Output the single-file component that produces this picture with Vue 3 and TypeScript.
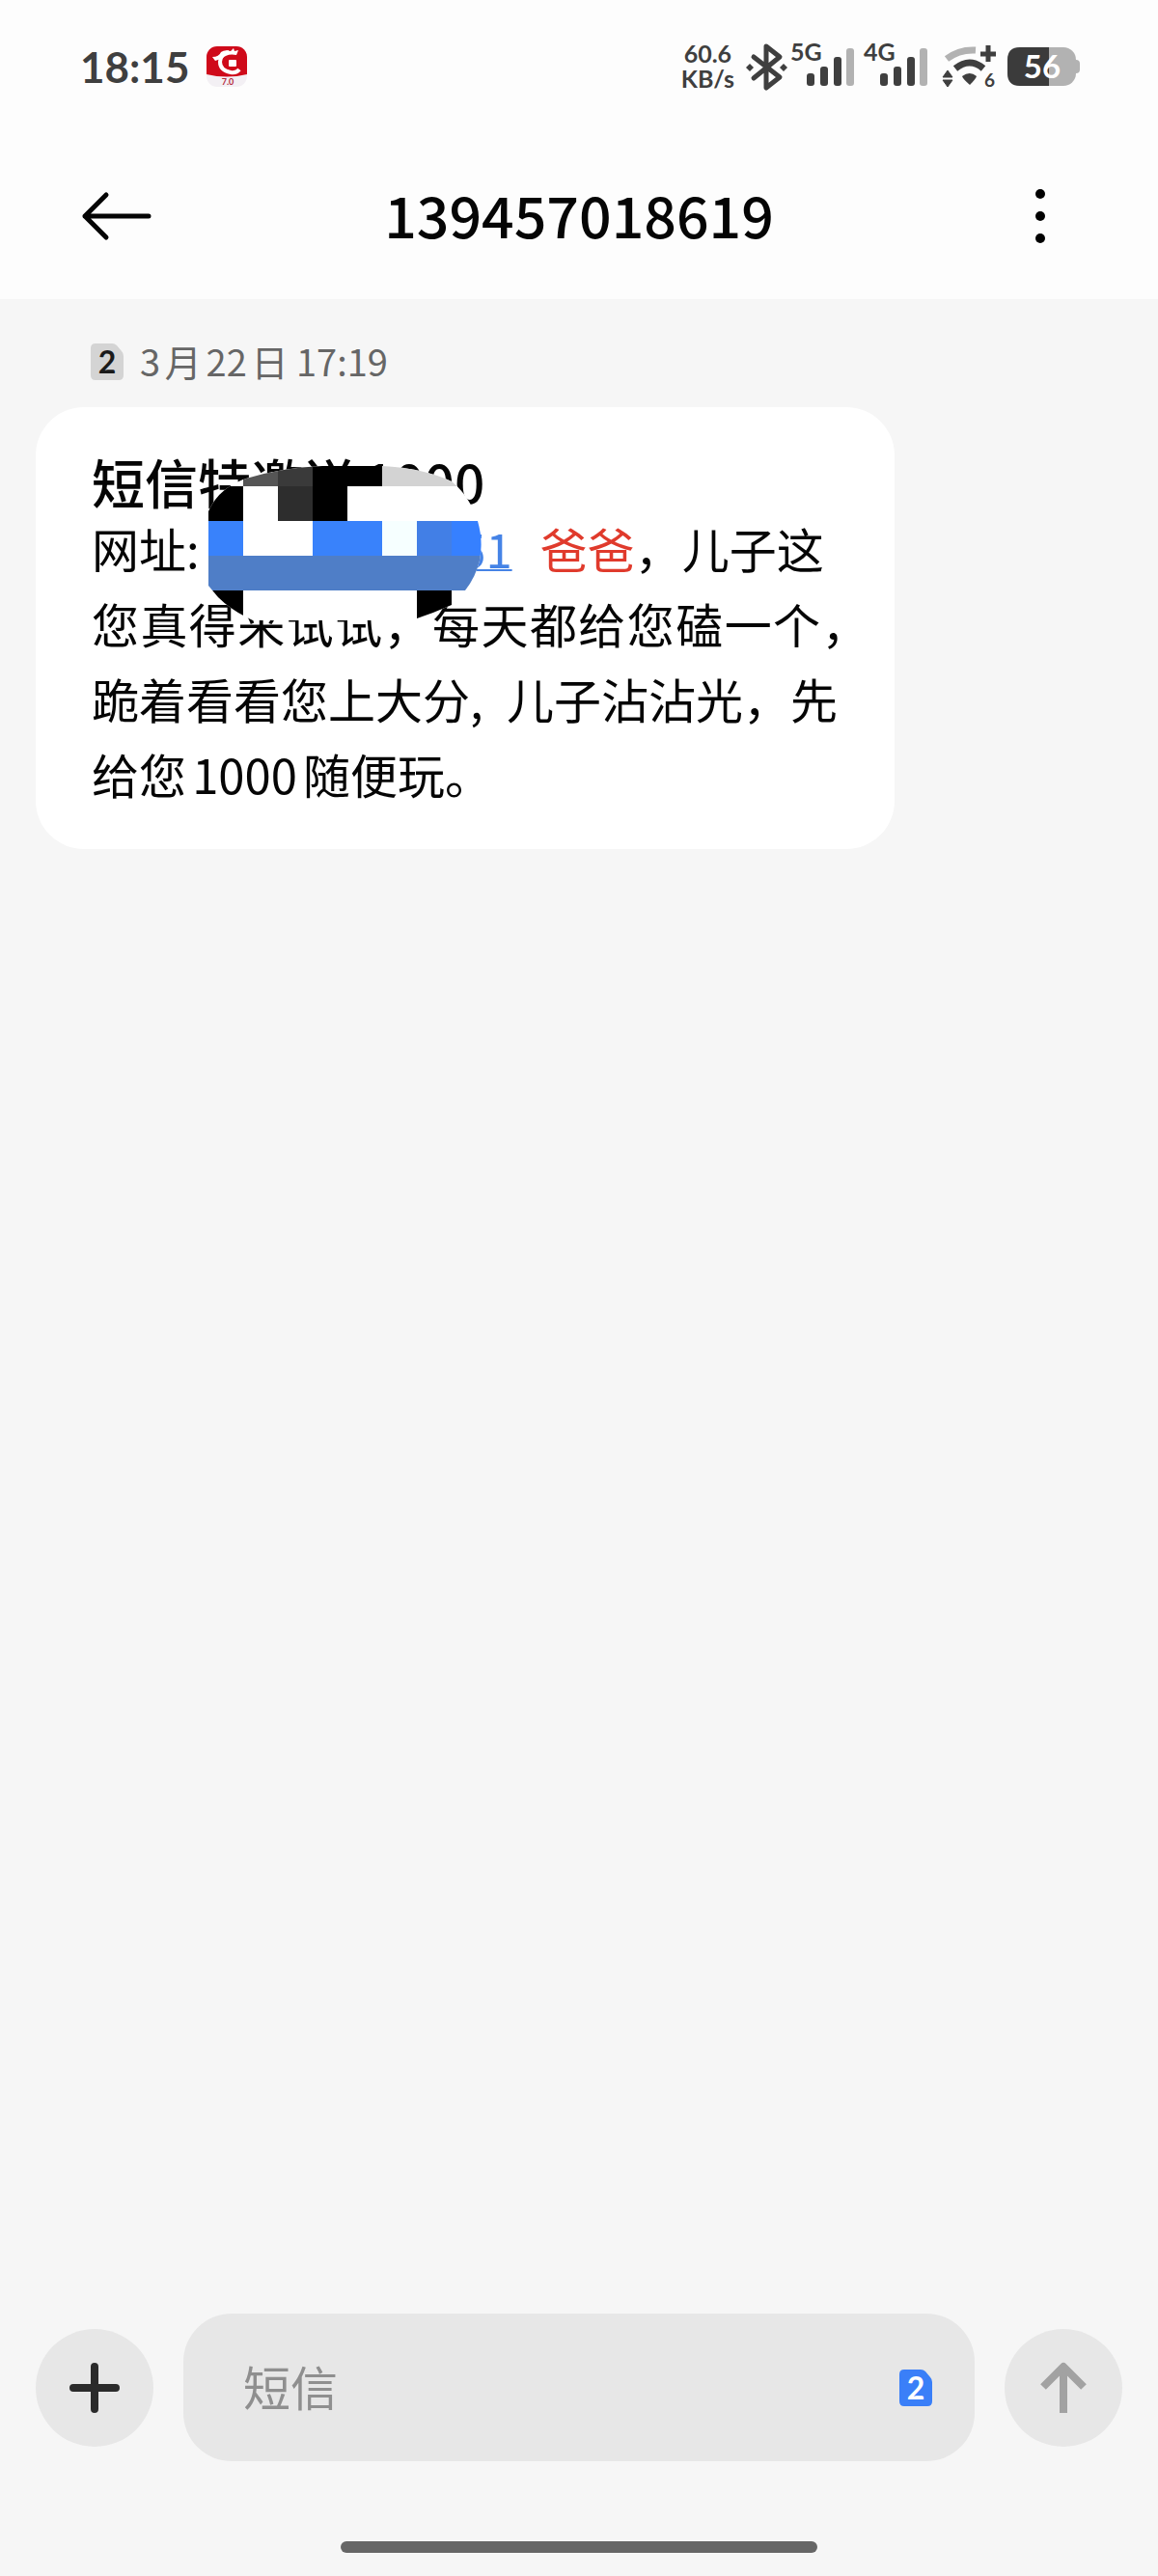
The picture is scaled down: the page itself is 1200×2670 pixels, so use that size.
<script setup lang="ts">
import { ref } from 'vue'

interface Block {
  x: number
  y: number
  w: number
  h: number
  fill: string
}

const draft = ref('')
const sender = '139457018619'

const blocks: Block[] = [
  { x: 36, y: 0, w: 36, h: 21, fill: '#555555' },
  { x: 72, y: 0, w: 36, h: 21, fill: '#3a3a3a' },
  { x: 108, y: 0, w: 72, h: 21, fill: '#000000' },
  { x: 180, y: 0, w: 104, h: 21, fill: '#d3d3d3' },
  { x: 0, y: 21, w: 36, h: 36, fill: '#000000' },
  { x: 72, y: 21, w: 36, h: 36, fill: '#2d2d2d' },
  { x: 108, y: 21, w: 36, h: 36, fill: '#000000' },
  { x: 0, y: 57, w: 36, h: 36, fill: '#3982fb' },
  { x: 108, y: 57, w: 72, h: 36, fill: '#3982fb' },
  { x: 180, y: 57, w: 36, h: 36, fill: '#f6ffff' },
  { x: 216, y: 57, w: 36, h: 36, fill: '#427fe6' },
  { x: 252, y: 57, w: 32, h: 36, fill: '#3680ff' },
  { x: 0, y: 93, w: 284, h: 36, fill: '#4f7ec7' },
  { x: 0, y: 129, w: 36, h: 32, fill: '#000000' },
  { x: 216, y: 129, w: 36, h: 32, fill: '#000000' },
]

const signals = ['5G', '4G']
</script>

<template>
  <div class="phone">
    <header class="top">
      <div class="status">
        <div class="status-left">
          <time class="clock">18:15</time>
          <svg class="app-icon" viewBox="0 0 42 42" width="42" height="42" aria-hidden="true">
            <defs>
              <clipPath id="appShape"><rect width="42" height="42" rx="11" /></clipPath>
            </defs>
            <g clip-path="url(#appShape)">
              <rect width="42" height="42" fill="#f3f0f4" />
              <path d="M0 0H42V29Q21 34 0 29Z" fill="#cf0a1a" />
            </g>
            <path d="M34 24Q31 28 25 27Q14 25 14 16Q15 7 23 6" fill="none" stroke="#fff" stroke-width="4" />
            <path d="M6 11Q13 11 15 6Q19 3 25 5L28 2L29 5L33 4L31 9Q21 7 16 13L12 14L9 15Z" fill="#fff" />
            <rect x="23" y="14" width="8" height="7" rx="1" fill="#fff" />
            <text x="22" y="40" text-anchor="middle" font-size="9" font-weight="700" fill="#b3283a">7.0</text>
          </svg>
        </div>
        <div class="status-right">
          <div class="speed"><span>60.6</span><span>KB/s</span></div>
          <svg class="bluetooth" viewBox="0 0 46 48" width="46" height="48" aria-hidden="true">
            <path d="M10 14L37 35L23 46V3L37 14L10 36" fill="none" stroke="#3f3f3f" stroke-width="5" stroke-linejoin="round" stroke-linecap="round" />
            <path d="M6 21L10 25L6 29L2 25ZM41 21L45 25L41 29L37 25Z" fill="#3f3f3f" />
          </svg>
          <svg v-for="name in signals" :key="name" class="signal" viewBox="0 0 68 56" width="68" height="56" aria-hidden="true">
            <text x="0" y="22" font-size="25" font-weight="700" fill="#3f3f3f">{{ name }}</text>
            <rect x="17" y="35" width="8" height="13" rx="3" fill="#3f3f3f" />
            <rect x="31" y="28" width="8" height="20" rx="3" fill="#3f3f3f" />
            <rect x="45" y="18" width="8" height="30" rx="3" fill="#3f3f3f" />
            <rect x="58" y="9" width="8" height="39" rx="3" fill="#b2b2b2" />
          </svg>
          <svg class="wifi" viewBox="0 0 58 52" width="58" height="52" aria-hidden="true">
            <path d="M4 18Q17 8 34 9" fill="none" stroke="#b2b2b2" stroke-width="7" />
            <path d="M13 28Q28 16 42 28" fill="none" stroke="#3f3f3f" stroke-width="7" />
            <path d="M20 36Q28 30 35 36Q34 39 28 45Q21 39 20 36Z" fill="#3f3f3f" />
            <path d="M0 37L5 30L10 37ZM0 40H10L5 47Z" fill="#3f3f3f" stroke="#3f3f3f" />
            <path d="M47 4V21M39 13H55" stroke="#3f3f3f" stroke-width="5" />
            <text x="43" y="47" font-size="19" font-weight="700" fill="#3f3f3f">6</text>
          </svg>
          <svg class="battery" viewBox="0 0 76 40" width="76" height="40" role="img" aria-label="56%">
            <rect width="71" height="40" rx="13" fill="#b2b2b2" />
            <path d="M13 0H43V40H13Q0 40 0 27V13Q0 0 13 0Z" fill="#3b3b3b" />
            <path d="M71 13Q75 13 75 17V23Q75 27 71 27Z" fill="#b2b2b2" />
            <text x="36" y="32" text-anchor="middle" font-size="33" font-weight="700" fill="#fff">56</text>
          </svg>
        </div>
      </div>
      <div class="title-bar">
        <button class="icon-button" type="button" aria-label="返回">
          <svg viewBox="0 0 74 54" width="74" height="54">
            <path d="M26 5L4 27L26 49M4 27H70" fill="none" stroke="#050505" stroke-width="5" stroke-linecap="round" stroke-linejoin="round" />
          </svg>
        </button>
        <h1>{{ sender }}</h1>
        <button class="icon-button more" type="button" aria-label="更多">
          <svg viewBox="0 0 74 60" width="74" height="60">
            <circle cx="36" cy="7" r="5" />
            <circle cx="36" cy="30" r="5" />
            <circle cx="36" cy="53" r="5" />
          </svg>
        </button>
      </div>
    </header>

    <main class="thread">
      <div class="stamp">
        <svg viewBox="0 0 34 38" width="34" height="38" aria-hidden="true">
          <path d="M5 0H22Q25 0 27 2L32 8Q34 10 34 13V33Q34 38 29 38H5Q0 38 0 33V5Q0 0 5 0Z" fill="#d4d4d4" />
          <text x="17" y="31" text-anchor="middle" font-size="32" font-weight="700" fill="#1a1a1a">2</text>
        </svg>
        <time>3月22日 17:19</time>
      </div>

      <article class="bubble">
        <h2>短信特邀送1000</h2>
        <p>
          <span class="line">网址:<a class="link" href="#">51</a><span class="alert">爸爸</span>&#xFF0C;儿子这</span>
          <span class="line full">您真得来试试&#xFF0C;每天都给您磕一个&#xFF0C;</span>
          <span class="line">跪着看看您上大分,&ensp;儿子沾沾光&#xFF0C;先</span>
          <span class="line">给您1000随便玩。</span>
        </p>
        <svg class="mosaic" viewBox="0 0 283 160" width="283" height="160" aria-hidden="true">
          <defs>
            <clipPath id="brush">
              <path d="M0 47Q10 24 36 14Q72 2 118 0H180Q222 2 252 16Q270 30 279 57Q285 78 281 98Q277 115 266 129L252 144Q234 152 216 158L200 160H46Q24 150 10 136L0 124Z" />
            </clipPath>
          </defs>
          <g clip-path="url(#brush)" shape-rendering="crispEdges">
            <rect width="283" height="160" fill="#ffffff" />
            <rect v-for="(b, i) in blocks" :key="i" :x="b.x" :y="b.y" :width="b.w" :height="b.h" :fill="b.fill" />
          </g>
        </svg>
      </article>
    </main>

    <footer class="composer">
      <form class="compose-row" @submit.prevent>
        <button class="round" type="button" aria-label="添加">
          <svg viewBox="0 0 54 54" width="54" height="54">
            <path d="M27 5V49M5 27H49" stroke="#2b2b2b" stroke-width="8" stroke-linecap="round" />
          </svg>
        </button>
        <div class="field">
          <input v-model="draft" type="text" placeholder="短信" aria-label="短信" />
          <button class="sim" type="button" aria-label="SIM 2">
            <svg viewBox="0 0 34 38" width="34" height="38">
              <path d="M5 0H22Q25 0 27 2L32 8Q34 10 34 13V33Q34 38 29 38H5Q0 38 0 33V5Q0 0 5 0Z" fill="#3a7ff8" />
              <text x="17" y="31" text-anchor="middle" font-size="32" font-weight="700" fill="#fff">2</text>
            </svg>
          </button>
        </div>
        <button class="round" type="submit" aria-label="发送">
          <svg viewBox="0 0 54 54" width="54" height="54">
            <path d="M27 6V53" stroke="#a2a2a2" stroke-width="8" />
            <path d="M6 26L27 5L48 26" fill="none" stroke="#a2a2a2" stroke-width="8" stroke-linejoin="round" />
          </svg>
        </button>
      </form>
      <div class="home-bar"></div>
    </footer>
  </div>
</template>

<style>
body {
  background: #f6f6f6;
}
</style>

<style scoped>
.phone {
  display: flex;
  flex-direction: column;
  min-height: 100vh;
  background: #f6f6f6;
  color: #050505;
  font-family: "Noto Sans CJK SC", sans-serif;
  text-autospace: normal;
}

button {
  display: flex;
  align-items: center;
  justify-content: center;
  padding: 0;
  border: 0;
  background: none;
  cursor: pointer;
}

svg {
  display: block;
  flex: none;
  overflow: visible;
  font-family: Lato, "Noto Sans CJK SC", sans-serif;
}

.top {
  background: #fdfdfd;
}

.status {
  display: flex;
  align-items: center;
  justify-content: space-between;
  height: 138px;
  padding: 0 80px 0 83px;
  font-family: Lato, "Noto Sans CJK SC", sans-serif;
}

.status-left,
.status-right {
  display: flex;
  align-items: center;
}

.status-left {
  gap: 18px;
}

.status-right {
  gap: 8px;
}

.clock {
  color: #3f3f3f;
  font-size: 44px;
  font-weight: 700;
  line-height: 60px;
}

.speed {
  display: flex;
  flex-direction: column;
  align-items: center;
  padding-bottom: 2px;
  color: #3f3f3f;
  font-size: 25px;
  font-weight: 700;
  line-height: 26px;
}

.bluetooth {
  margin-right: -6px;
  margin-left: 2px;
}

.wifi {
  margin-right: 1px;
  margin-left: 6px;
}

.title-bar {
  display: flex;
  align-items: center;
  justify-content: space-between;
  height: 172px;
  padding: 0 84px;
}

.title-bar h1 {
  margin: 0;
  padding-bottom: 4px;
  font-size: 59px;
  font-weight: 500;
  line-height: 80px;
}

.thread {
  flex: 1;
  padding: 36px 37px 0;
}

.stamp {
  display: flex;
  align-items: center;
  gap: 17px;
  padding: 0 57px 18px;
  color: #666666;
  font-size: 38px;
  line-height: 58px;
}

.stamp time {
  padding-bottom: 2px;
  line-height: 56px;
}

.bubble {
  position: relative;
  box-sizing: border-box;
  width: 79%;
  padding: 45px 26px 39px 58px;
  border-radius: 50px;
  background: #ffffff;
}

.bubble h2 {
  margin: 0;
  font-size: 55px;
  font-weight: 500;
  line-height: 62px;
}

.bubble p {
  margin: 0;
  font-size: 49px;
  line-height: 78px;
}

.line {
  display: block;
  white-space: nowrap;
}

.full {
  text-align-last: justify;
}

.link {
  display: inline-block;
  width: 324px;
  color: #4583e6;
  text-align: right;
  text-decoration-thickness: 2px;
}

.alert {
  margin-left: 29px;
  color: #e03a2c;
}

.mosaic {
  position: absolute;
  top: 61px;
  left: 179px;
}

.composer {
  padding: 0 37px 24px;
}

.compose-row {
  display: flex;
  align-items: center;
  gap: 31px;
}

.round {
  flex: none;
  width: 122px;
  height: 122px;
  border-radius: 50%;
  background: #e7e7e7;
}

.field {
  display: flex;
  flex: 1;
  align-items: center;
  box-sizing: border-box;
  height: 153px;
  padding: 0 44px 0 62px;
  border-radius: 50px;
  background: #e7e7e7;
}

.field input {
  flex: 1;
  min-width: 0;
  padding: 0 0 4px;
  border: 0;
  outline: 0;
  background: none;
  color: #050505;
  font: inherit;
  font-size: 49px;
  line-height: 78px;
}

.field input::placeholder {
  color: #8f8f8f;
  opacity: 1;
}

.home-bar {
  width: 494px;
  height: 12px;
  margin: 83px auto 0;
  border-radius: 6px;
  background: #666666;
}
</style>
